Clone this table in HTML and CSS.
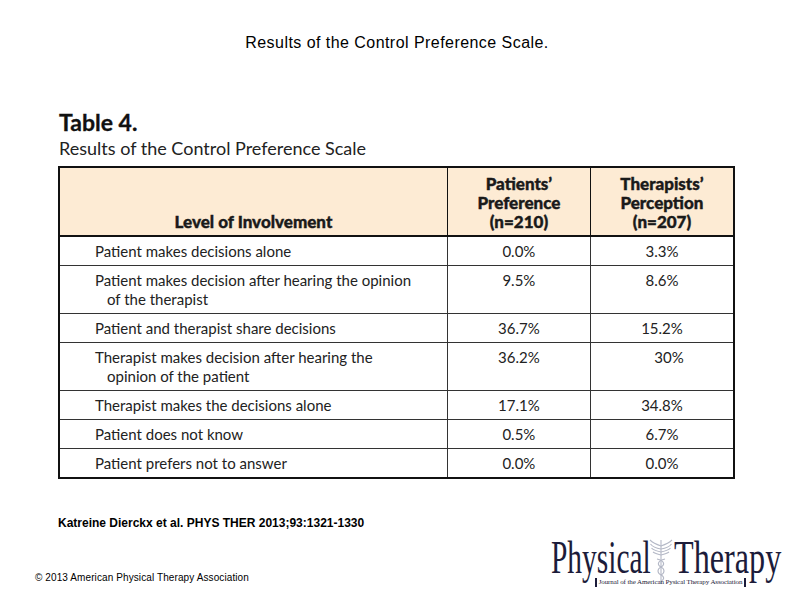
FILE: index.html
```html
<!DOCTYPE html>
<html>
<head>
<meta charset="utf-8">
<link rel="stylesheet" href="styles.css">
</head>
<body>
<div class="slide">
  <h1 class="slide-title">Results of the Control Preference Scale.</h1>
  <div class="figure">
    <div class="table-label">Table 4.</div>
    <div class="table-caption">Results of the Control Preference Scale</div>
    <table class="data">
      <thead>
        <tr>
          <th class="col-level">Level of Involvement</th>
          <th class="col-num">Patients’<br>Preference<br>(n=210)</th>
          <th class="col-num col-last">Therapists’<br>Perception<br>(n=207)</th>
        </tr>
      </thead>
      <tbody>
        <tr><td class="lvl">Patient makes decisions alone</td><td>0.0%</td><td>3.3%</td></tr>
        <tr><td class="lvl">Patient makes decision after hearing the opinion of the therapist</td><td>9.5%</td><td>8.6%</td></tr>
        <tr><td class="lvl">Patient and therapist share decisions</td><td>36.7%</td><td>15.2%</td></tr>
        <tr><td class="lvl">Therapist makes decision after hearing the opinion of the patient</td><td>36.2%</td><td class="pad-r">30%</td></tr>
        <tr><td class="lvl">Therapist makes the decisions alone</td><td>17.1%</td><td>34.8%</td></tr>
        <tr><td class="lvl">Patient does not know</td><td>0.5%</td><td>6.7%</td></tr>
        <tr><td class="lvl">Patient prefers not to answer</td><td>0.0%</td><td>0.0%</td></tr>
      </tbody>
    </table>
  </div>
  <div class="citation">Katreine Dierckx et al. PHYS THER 2013;93:1321-1330</div>
  <div class="footer">
    <div class="copyright">© 2013 American Physical Therapy Association</div>
    <div class="logo">
      <div class="logo-main">
        <span class="logo-word word-a">Physical</span>
        <svg class="caduceus" width="24" height="46" viewBox="0 0 24 46">
          <g fill="none" stroke="#b4b8c6" stroke-width="1.1">
            <line x1="12" y1="1" x2="12" y2="45"/>
            <path d="M12 7 C6 5 3 3 1 1 M12 7 C18 5 21 3 23 1"/>
            <path d="M12 10 C6 9 3 7 1.5 5 M12 10 C18 9 21 7 22.5 5"/>
            <path d="M12 13 C7 12 4 11 2.5 9 M12 13 C17 12 20 11 21.5 9"/>
            <path d="M12 16 C8 15 6 14.5 4 13 M12 16 C16 15 18 14.5 20 13"/>
            <path d="M8 20 C16 22 16 26 12 28 C8 30 8 34 12 36 C16 38 15 41 12 42"/>
            <path d="M16 20 C8 22 8 26 12 28 C16 30 16 34 12 36"/>
          </g>
        </svg>
        <span class="logo-word word-b">Therapy</span>
      </div>
      <div class="logo-sub"><span class="bar"></span>Journal of the American Pysical Therapy Association<span class="bar"></span></div>
    </div>
  </div>
</div>
</body>
</html>
```

FILE: styles.css
```css
html, body {
  margin: 0;
  padding: 0;
  background: #ffffff;
}
.slide {
  width: 794px;
  height: 595px;
  overflow: hidden;
  display: flex;
  flex-direction: column;
  font-family: "Liberation Sans", Arial, sans-serif;
  color: #000;
}
.slide-title {
  margin: 34px 0 0 0;
  font-size: 16px;
  line-height: 18px;
  font-weight: normal;
  letter-spacing: 0.45px;
  text-align: center;
}
.figure {
  margin: 56px 0 0 58px;
  font-family: "Lato", "Open Sans", sans-serif;
  color: #222;
}
.table-label {
  font-size: 23px;
  line-height: 28px;
  font-weight: bold;
  color: #111;
  padding-left: 1px;
  -webkit-text-stroke: 0.3px #111;
}
.table-caption {
  font-size: 18px;
  line-height: 22px;
  margin-top: 1px;
  padding-left: 1px;
}
.data {
  margin-top: 7px;
  width: 677px;
  border-collapse: collapse;
  border: 2px solid #111;
  font-size: 15px;
  line-height: 19px;
}
.data th {
  background: #fdebd4;
  font-weight: 900;
  font-size: 17px;
  color: #1a1a1a;
  -webkit-text-stroke: 0.4px #1a1a1a;
  vertical-align: bottom;
  text-align: center;
  padding: 6px 0 4px 0;
  border: 1px solid #111;
  border-bottom: 2px solid #111;
  height: 57px;
}
.data th.col-level {
  width: 384px;
}
.data th.col-num {
  width: 141px;
}
.data td {
  border: 1px solid #333;
  padding: 5px 0 4px 0;
  vertical-align: top;
  text-align: center;
}
.data td.pad-r {
  padding-left: 14px;
}
.data td.lvl {
  text-align: left;
  padding-left: 47px;
  padding-right: 28px;
  text-indent: -12px;
}
.citation {
  margin: 37px 0 0 58px;
  font-size: 12px;
  line-height: 14px;
  font-weight: bold;
  letter-spacing: 0;
}
.footer {
  display: flex;
  justify-content: space-between;
  align-items: flex-end;
  margin-top: auto;
  padding: 0 14px 8px 35px;
}
.copyright {
  font-size: 10px;
  line-height: 12px;
  letter-spacing: 0.1px;
  margin-bottom: 3px;
}
.logo {
  display: flex;
  flex-direction: column;
  align-items: center;
  color: #1c1c3a;
  font-family: "Liberation Serif", "Times New Roman", serif;
}
.logo-main {
  display: flex;
  align-items: flex-end;
  height: 36px;
}
.logo-word {
  display: inline-block;
  font-size: 46px;
  line-height: 36px;
  white-space: nowrap;
  transform-origin: left bottom;
}
.word-a {
  width: 97px;
  transform: scaleX(0.64);
}
.word-b {
  width: 106px;
  transform: scaleX(0.7);
}
.caduceus {
  margin: 0 1px -9px 1px;
}
.logo-sub {
  display: flex;
  align-items: center;
  font-size: 7px;
  line-height: 9px;
  letter-spacing: -0.1px;
  margin: 2px 0 0 10px;
}
.logo-sub .bar {
  display: inline-block;
  width: 2px;
  height: 9px;
  background: #1c1c3a;
  margin: 0 2px;
}
```
